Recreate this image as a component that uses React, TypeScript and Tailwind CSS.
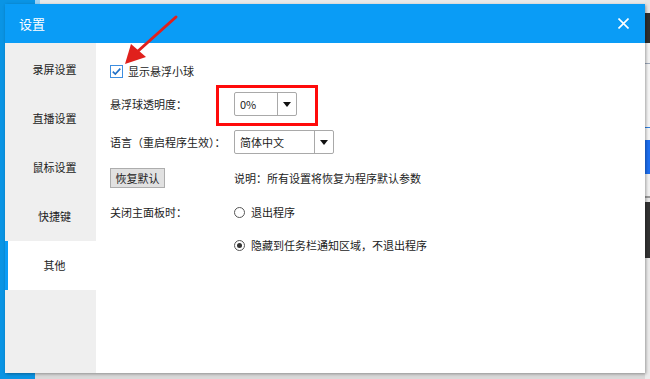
import React from "react";

const FONT = "font-['Microsoft_YaHei','Noto_Sans_CJK_SC',sans-serif]";

const menuItems = ["录屏设置", "直播设置", "鼠标设置", "快捷键", "其他"];

const Checkbox = () => (
  <svg width="13" height="13" viewBox="0 0 13 13" className="shrink-0">
    <rect x="0.5" y="0.5" width="12" height="12" fill="#fff" stroke="#3d8ee0" />
    <path d="M2.8 6.6 L5.3 9.1 L10.3 3.6" fill="none" stroke="#1f6fc6" strokeWidth="1.6" />
  </svg>
);

const Radio = ({ checked }: { checked?: boolean }) => (
  <span className="w-[11px] h-[11px] rounded-full border border-[#555] bg-white flex items-center justify-center shrink-0">
    {checked && <span className="w-[5px] h-[5px] rounded-full bg-[#333]" />}
  </span>
);

const Select = ({ value, width }: { value: string; width: string }) => (
  <div className={`${width} h-[24px] flex border border-[#a9a9a9] rounded-[2px] bg-white`}>
    <span className="flex-1 flex items-center pl-[5px] text-[11px] text-[#222]">{value}</span>
    <span className="w-[19px] border-l border-[#a9a9a9] flex items-center justify-center">
      <svg width="8" height="5" viewBox="0 0 8 5">
        <path d="M0 0 L8 0 L4 5 Z" fill="#111" />
      </svg>
    </span>
  </div>
);

export default function App() {
  return (
    <div className={`relative w-[650px] h-[379px] overflow-hidden bg-[#d9d9d9] ${FONT}`}>
      {/* desktop behind the dialog */}
      <div className="absolute left-0 top-0 w-[35px] h-full bg-[#0a94e4]" />
      <div className="absolute left-[35px] top-0 w-[5px] h-[4px] bg-[#9fd3f5]" />
      <div className="absolute left-[40px] top-0 right-0 h-[4px] bg-[#e9e9e9]" />
      <div className="absolute right-0 top-0 w-[5px] h-full flex flex-col bg-[#ececec]">
        <div className="h-[13px] bg-[#e6e6e6]" />
        <div className="h-[30px] bg-[#2e2e2e]" />
        <div className="h-[20px] bg-[#f3f3f3]" />
        <div className="h-[1px] bg-[#9aa6b8]" />
        <div className="h-[63px] bg-[#f5f5f5]" />
        <div className="h-[1px] bg-[#2f7fe0]" />
        <div className="h-[12px] bg-[#f5f5f5]" />
        <div className="h-[34px] bg-[#1d6ff0]" />
        <div className="h-[22px] bg-[#f2f2f2]" />
        <div className="h-[2px] bg-[#9c9c9c]" />
        <div className="h-[4px] bg-[#e9e9e9]" />
        <div className="h-[56px] bg-[#333]" />
        <div className="flex-1 bg-[#ebebeb]" />
      </div>

      {/* dialog window */}
      <div className="absolute left-[5px] top-[4px] w-[640px] h-[369px] bg-white flex flex-col shadow-[1px_1px_3px_rgba(0,0,0,0.35)]">
        <div className="h-[39px] bg-[#0a9cf6] flex items-center justify-between pl-[14px] pr-[16px]">
          <span className="text-white text-[13px]">设置</span>
          <svg width="11" height="11" viewBox="0 0 11 11">
            <path d="M0.5 0.5 L10.5 10.5 M10.5 0.5 L0.5 10.5" stroke="#fff" strokeWidth="1.6" />
          </svg>
        </div>

        <div className="flex-1 flex">
          <div className="w-[91px] bg-[#efefef] flex flex-col pt-[2px]">
            {menuItems.map((item, i) => {
              const active = i === menuItems.length - 1;
              return (
                <div
                  key={item}
                  className={`relative h-[49px] flex items-center justify-center pl-[8px] text-[11px] text-[#222] ${
                    active ? "bg-white" : ""
                  }`}
                >
                  {active && <span className="absolute left-0 top-0 w-[3px] h-full bg-[#0a9cf6]" />}
                  {item}
                </div>
              );
            })}
          </div>

          <div className="flex-1 flex flex-col pl-[14px] text-[11px] text-[#222]">
            <div className="mt-[16px] h-[24px] flex items-center gap-[5px]">
              <Checkbox />
              <span>显示悬浮小球</span>
            </div>

            <div className="mt-[9px] h-[24px] flex items-center">
              <span className="w-[124px]">悬浮球透明度：</span>
              <Select value="0%" width="w-[63px]" />
            </div>

            <div className="mt-[14px] h-[24px] flex items-center">
              <span className="w-[124px]">语言（重启程序生效）：</span>
              <Select value="简体中文" width="w-[100px]" />
            </div>

            <div className="mt-[12px] h-[24px] flex items-center">
              <span className="w-[124px]">
                <span className="inline-flex w-[55px] h-[20px] items-center justify-center bg-[#e1e1e1] border border-[#adadad]">
                  恢复默认
                </span>
              </span>
              <span>说明：所有设置将恢复为程序默认参数</span>
            </div>

            <div className="mt-[10px] h-[24px] flex items-center">
              <span className="w-[124px]">关闭主面板时：</span>
              <span className="flex items-center gap-[6px]">
                <Radio />
                退出程序
              </span>
            </div>

            <div className="mt-[9px] h-[24px] flex items-center">
              <span className="w-[124px]" />
              <span className="flex items-center gap-[6px]">
                <Radio checked />
                隐藏到任务栏通知区域，不退出程序
              </span>
            </div>
          </div>
        </div>
      </div>

      {/* annotations */}
      <div className="absolute left-[216px] top-[85px] w-[102px] h-[41px] border-[3px] border-[#ff0a0a]" />
      <svg className="absolute left-0 top-0 pointer-events-none" width="650" height="379">
        <line x1="176" y1="17" x2="137" y2="52" stroke="#e0201c" strokeWidth="3" strokeLinecap="round" />
        <polygon points="125,64 131,44 146,57" fill="#e0201c" />
      </svg>
    </div>
  );
}
